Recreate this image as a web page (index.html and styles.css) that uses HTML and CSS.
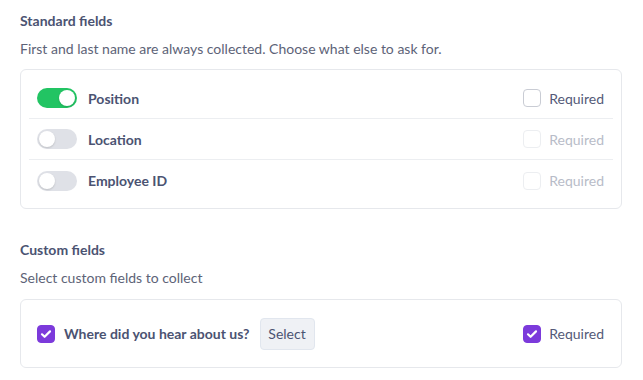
FILE: index.html
```html
<!DOCTYPE html>
<html>
<head>
<meta charset="utf-8">
<link rel="stylesheet" href="styles.css">
</head>
<body>
<div class="page">
  <section class="section">
    <h2 class="title">Standard fields</h2>
    <p class="desc">First and last name are always collected. Choose what else to ask for.</p>
    <div class="card">
      <div class="row">
        <div class="left">
          <span class="toggle on"><span class="knob"></span></span>
          <span class="label">Position</span>
        </div>
        <label class="req">
          <span class="box"></span>
          <span class="req-text">Required</span>
        </label>
      </div>
      <div class="row">
        <div class="left">
          <span class="toggle"><span class="knob"></span></span>
          <span class="label">Location</span>
        </div>
        <label class="req disabled">
          <span class="box"></span>
          <span class="req-text">Required</span>
        </label>
      </div>
      <div class="row">
        <div class="left">
          <span class="toggle"><span class="knob"></span></span>
          <span class="label">Employee ID</span>
        </div>
        <label class="req disabled">
          <span class="box"></span>
          <span class="req-text">Required</span>
        </label>
      </div>
    </div>
  </section>
  <section class="section custom">
    <h2 class="title">Custom fields</h2>
    <p class="desc">Select custom fields to collect</p>
    <div class="card">
      <div class="row tall">
        <div class="left">
          <span class="box checked"><svg viewBox="0 0 18 18" width="18" height="18"><path d="M5 9.3l2.6 2.5L13 6.4" fill="none" stroke="#fff" stroke-width="2.2" stroke-linecap="round" stroke-linejoin="round"/></svg></span>
          <span class="label">Where did you hear about us?</span>
          <button class="select">Select</button>
        </div>
        <label class="req">
          <span class="box checked"><svg viewBox="0 0 18 18" width="18" height="18"><path d="M5 9.3l2.6 2.5L13 6.4" fill="none" stroke="#fff" stroke-width="2.2" stroke-linecap="round" stroke-linejoin="round"/></svg></span>
          <span class="req-text">Required</span>
        </label>
      </div>
    </div>
  </section>
</div>
</body>
</html>
```

FILE: styles.css
```css
* { box-sizing: border-box; }
html, body { margin: 0; padding: 0; background: #fff; }
body {
  font-family: Lato, "Noto Sans", sans-serif;
  color: #4b5372;
}
.page {
  padding: 12px 21px 0 20px;
}
.title {
  margin: 0;
  font-size: 14px;
  line-height: 18px;
  font-weight: 700;
  color: #4b5372;
}
.desc {
  margin: 10px 0 0;
  font-size: 14px;
  line-height: 18px;
  color: #5d6377;
}
.card {
  margin-top: 11px;
  border: 1px solid #e6e8ec;
  border-radius: 6px;
  padding: 8px 8px 7px;
}
.custom { margin-top: 32px; }
.custom .card { margin-top: 12px; padding-bottom: 8px; }
.row {
  display: flex;
  align-items: center;
  justify-content: space-between;
  height: 41px;
  padding: 0 9px 0 8px;
  border-bottom: 1px solid #eceef1;
}
.row:last-child { border-bottom: none; height: 41px; }
.row.tall { height: 51px; }
.left {
  display: flex;
  align-items: center;
}
.label {
  font-size: 14px;
  font-weight: 700;
  color: #4b5372;
}
.toggle {
  position: relative;
  width: 40px;
  height: 20px;
  border-radius: 10px;
  background: #dfe1e7;
  margin-right: 11px;
  display: inline-block;
}
.toggle.on { background: #22c463; }
.knob {
  position: absolute;
  top: 2px;
  left: 2px;
  width: 16px;
  height: 16px;
  border-radius: 50%;
  background: #fff;
  box-shadow: 0 1px 2px rgba(0,0,0,0.15);
}
.toggle.on .knob { left: 22px; }
.req {
  display: flex;
  align-items: center;
}
.box {
  width: 18px;
  height: 18px;
  border: 1px solid #c9ccd4;
  border-radius: 4px;
  background: #fff;
  margin-right: 8px;
  display: inline-flex;
}
.box.checked {
  background: #7c3adb;
  border-color: #7c3adb;
}
.box.checked svg { margin: -1px; }
.req-text {
  font-size: 14px;
  color: #545a78;
}
.req.disabled .box { border-color: #eceef1; }
.req.disabled .req-text { color: #b8bcc8; }
.left .box.checked { margin-right: 9px; }
.select {
  margin-left: 10px;
  height: 32px;
  width: 55px;
  border: 1px solid #e1e6ee;
  background: #eff1f5;
  border-radius: 4px;
  font-family: Lato, sans-serif;
  font-size: 14px;
  color: #4b5372;
  padding: 0;
}
```
